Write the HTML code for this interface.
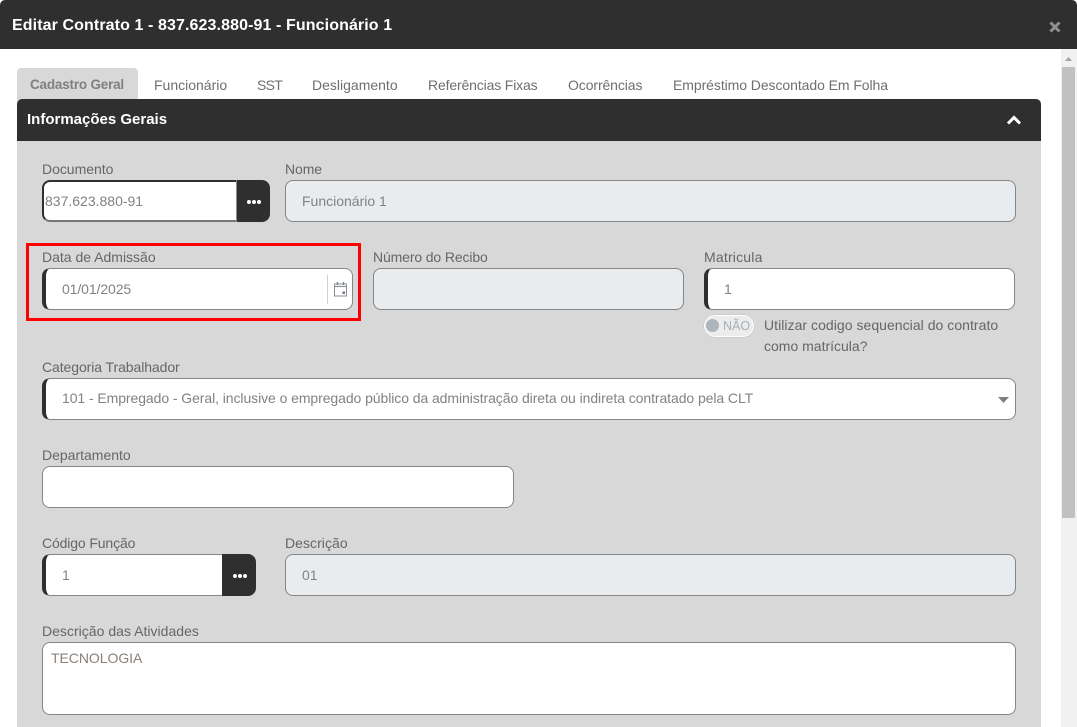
<!DOCTYPE html>
<html lang="pt-BR">
<head>
<meta charset="utf-8">
<title>Editar Contrato</title>
<style>
html,body{margin:0;padding:0;width:1077px;height:727px;overflow:hidden;background:#fff;font-family:"Liberation Sans",sans-serif}
.a{position:absolute;box-sizing:border-box}
.t{position:absolute;white-space:nowrap;line-height:20px;height:20px}
.lab{font-size:14px;color:#666}
.val{font-size:14px;color:#828282}
.tab{font-size:14px;color:#6f6f6f;top:75px}
.in{position:absolute;box-sizing:border-box;background:#fff;border:1px solid #868686;border-radius:8px}
.dis{background:#e9ecef}
.bar{border-left:4px solid #2f2f2f}
.btn{position:absolute;box-sizing:border-box;background:#2f2f2f;border-radius:0 8px 8px 0}
.dot{position:absolute;width:4px;height:4px;border-radius:50%;background:#fff}
</style>
</head>
<body>
<div class="a" style="left:0;top:0;width:1077px;height:49px;background:#2f2f2f;border-radius:5px 5px 0 0"></div>
<div class="t" style="left:12px;top:16px;font-size:16px;font-weight:bold;color:#fff;letter-spacing:.1px">Editar Contrato 1 - 837.623.880-91 - Funcionário 1</div>
<svg class="a" style="left:1049px;top:21px" width="12" height="12" viewBox="0 0 12 12"><path d="M1.500 1.500L10.500 10.500M10.500 1.500L1.500 10.500" stroke="#909090" stroke-width="3"/></svg>

<div class="a" style="left:1061px;top:49px;width:16px;height:678px;background:#f1f1f1"></div>
<div class="a" style="left:1062px;top:67px;width:13px;height:451px;background:#c1c1c1"></div>
<svg class="a" style="left:1064px;top:56px" width="9" height="6" viewBox="0 0 9 6"><path d="M4.500 1L8 5H1z" fill="#a3a3a3"/></svg>

<div class="a" style="left:17px;top:68px;width:121px;height:36px;background:#d8d8d8;border-radius:4px 4px 0 0"></div>
<div class="t tab" style="left:30px;color:#808080;font-weight:bold;font-size:13.500px;letter-spacing:-.2px">Cadastro Geral</div>
<div class="t tab" style="left:154px">Funcionário</div>
<div class="t tab" style="left:257px;letter-spacing:-.7px">SST</div>
<div class="t tab" style="left:312px">Desligamento</div>
<div class="t tab" style="left:428px;letter-spacing:-.15px">Referências Fixas</div>
<div class="t tab" style="left:568px;letter-spacing:-.1px">Ocorrências</div>
<div class="t tab" style="left:673px;letter-spacing:-.07px">Empréstimo Descontado Em Folha</div>

<div class="a" style="left:17px;top:99px;width:1024px;height:628px;background:#d8d8d8;border-radius:5px 5px 0 0"></div>
<div class="a" style="left:17px;top:99px;width:1024px;height:42px;background:#2f2f2f;border-radius:5px 5px 0 0"></div>
<div class="t" style="left:27px;top:110px;font-size:15px;font-weight:bold;color:#fff">Informações Gerais</div>
<svg class="a" style="left:1006px;top:114px" width="16" height="12" viewBox="0 0 16 12"><path d="M2 9.500L8 3.500L14 9.500" fill="none" stroke="#fff" stroke-width="3"/></svg>

<div class="t lab" style="left:42px;top:159px;letter-spacing:-.03px">Documento</div>
<div class="a" style="left:42px;top:180px;width:196px;height:42px;background:#fff;border:2px solid #2f2f2f;border-bottom-color:#777;border-right:0;border-radius:8px 0 0 8px"></div>
<div class="t val" style="left:45px;top:191px">837.623.880-91</div>
<div class="a" style="left:236px;top:180px;width:1px;height:42px;background:#8a8a8a"></div>
<div class="btn" style="left:237px;top:180px;width:33px;height:42px"></div>
<i class="dot" style="left:247px;top:199.500px"></i><i class="dot" style="left:252px;top:199.500px"></i><i class="dot" style="left:257px;top:199.500px"></i>

<div class="t lab" style="left:285px;top:159px;letter-spacing:-.1px">Nome</div>
<div class="in dis" style="left:285px;top:180px;width:731px;height:42px"></div>
<div class="t val" style="left:302px;top:191px">Funcionário 1</div>

<div class="a" style="left:26px;top:243px;width:335px;height:78px;border:3px solid #f00"></div>
<div class="t lab" style="left:42px;top:247px">Data de Admissão</div>
<div class="in bar" style="left:42px;top:268px;width:311px;height:42px"></div>
<div class="t val" style="left:62px;top:279px;letter-spacing:-.1px">01/01/2025</div>
<div class="a" style="left:327px;top:275px;width:1px;height:29px;background:#d0d0d0"></div>
<svg class="a" style="left:333px;top:281px" width="15" height="16" viewBox="0 0 15 16"><path d="M1.500 3H13.500V15H1.500z" fill="#fff" stroke="#8a9099" stroke-width="1"/><path d="M1.500 5.500H13.500" stroke="#8a9099" stroke-width="1.200"/><path d="M4.500 1V4M10.500 1V4" stroke="#7a808a" stroke-width="1.400"/><rect x="9.500" y="10.500" width="2.500" height="2.500" fill="#6f7580"/></svg>

<div class="t lab" style="left:373px;top:247px;letter-spacing:-.13px">Número do Recibo</div>
<div class="in dis" style="left:373px;top:268px;width:311px;height:42px"></div>

<div class="t lab" style="left:704px;top:247px;letter-spacing:.2px">Matricula</div>
<div class="in bar" style="left:704px;top:268px;width:311px;height:42px"></div>
<div class="t val" style="left:724px;top:279px">1</div>

<div class="a" style="left:704px;top:315px;width:50px;height:22px;background:#ececec;border:1px solid #fff;border-radius:11px;box-shadow:0 0 0 .5px #bcc0c6"></div>
<div class="a" style="left:706px;top:319px;width:13px;height:13px;background:#adb5bd;border-radius:50%"></div>
<div class="t" style="left:723px;top:316px;font-size:12.500px;color:#a9afb6">NÃO</div>
<div class="t lab" style="left:764px;top:315px;letter-spacing:.04px">Utilizar codigo sequencial do contrato</div>
<div class="t lab" style="left:764px;top:336px">como matrícula?</div>

<div class="t lab" style="left:42px;top:357px;letter-spacing:-.08px">Categoria Trabalhador</div>
<div class="in bar" style="left:42px;top:378px;width:974px;height:42px"></div>
<div class="t val" style="left:62px;top:388px;letter-spacing:-.075px">101 - Empregado - Geral, inclusive o empregado público da administração direta ou indireta contratado pela CLT</div>
<svg class="a" style="left:998px;top:397px" width="11" height="6" viewBox="0 0 11 6"><path d="M0 0H11L5.500 6z" fill="#808080"/></svg>

<div class="t lab" style="left:42px;top:445px">Departamento</div>
<div class="in" style="left:42px;top:466px;width:472px;height:42px"></div>

<div class="t lab" style="left:42px;top:533px;letter-spacing:-.13px">Código Função</div>
<div class="a bar" style="left:42px;top:554px;width:182px;height:42px;background:#fff;border-top:1px solid #868686;border-bottom:1px solid #868686;border-radius:8px 0 0 8px"></div>
<div class="t val" style="left:62px;top:565px">1</div>
<div class="btn" style="left:222px;top:554px;width:34px;height:42px"></div>
<i class="dot" style="left:233px;top:573.500px"></i><i class="dot" style="left:238px;top:573.500px"></i><i class="dot" style="left:243px;top:573.500px"></i>

<div class="t lab" style="left:285px;top:533px;letter-spacing:.05px">Descrição</div>
<div class="in dis" style="left:285px;top:554px;width:731px;height:42px"></div>
<div class="t val" style="left:302px;top:565px">01</div>

<div class="t lab" style="left:42px;top:621px;letter-spacing:.02px">Descrição das Atividades</div>
<div class="in" style="left:42px;top:642px;width:974px;height:73px"></div>
<div class="t val" style="left:51px;top:648px;font-size:14px;color:#8a8078;letter-spacing:-.05px">TECNOLOGIA</div>
</body>
</html>
